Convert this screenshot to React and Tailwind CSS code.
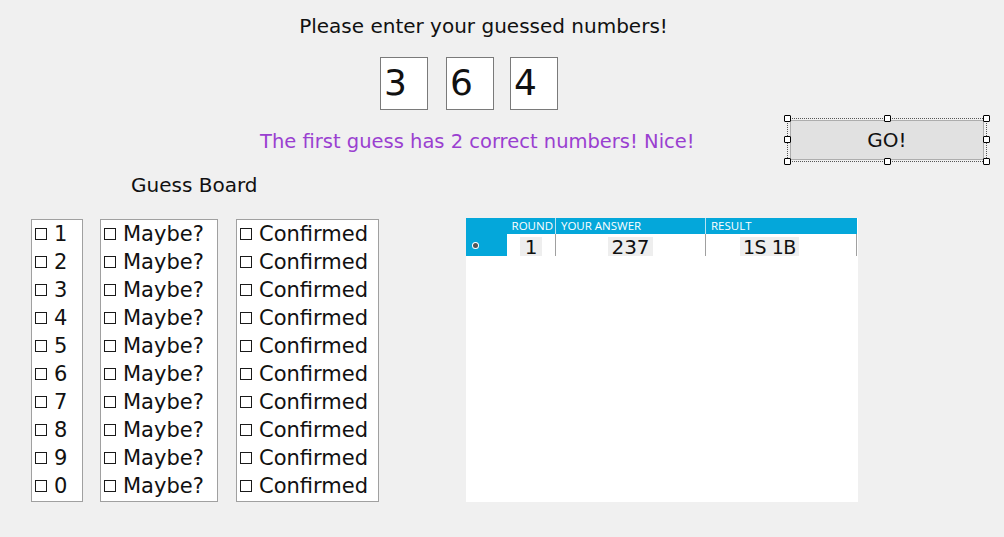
import { useState } from "react";

const digits = ["1", "2", "3", "4", "5", "6", "7", "8", "9", "0"];

function Box() {
  return <span className="inline-block w-[12px] h-[12px] border border-[#1a1a1a] bg-white shrink-0" />;
}

function CheckColumn({ label, width }) {
  return (
    <div className={`${width} border border-[#a0a0a0] bg-white pb-px pl-[3px]`}>
      {digits.map((d) => (
        <div key={d} className="h-[28px] flex items-center gap-[7px]">
          <Box />
          <span className="text-[21px] leading-none text-[#111]">{label || d}</span>
        </div>
      ))}
    </div>
  );
}

function Handle() {
  return <span className="block w-[7px] h-[7px] bg-white border border-black rounded-[1px]" />;
}

function App() {
  const [guess] = useState(["3", "6", "4"]);

  return (
    <div className="w-[1004px] h-[537px] bg-[#f0f0f0] overflow-hidden text-[#111]" style={{ fontFamily: '"DejaVu Sans", sans-serif' }}>
      {/* title */}
      <div className="w-[967px] pt-[13px] h-[39px] text-center text-[20px] leading-[26px]">
        Please enter your guessed numbers!
      </div>

      {/* guess inputs */}
      <div className="flex mt-[18px] pl-[380px] gap-[18px] h-[53px]">
        {guess.map((g, i) => (
          <div key={i} className={`w-[48px] h-[53px] bg-white border border-[#7a7a7a] pl-[3px] text-[36px] leading-[50px] ${i === 2 ? "-ml-[2px]" : ""}`}>
            {g}
          </div>
        ))}
      </div>

      {/* message + GO */}
      <div className="flex items-center mt-[5px] h-[50px]">
        <div className="pl-[260px] pt-[4px] w-[784px] text-[19.5px] text-[#9a3fd0]">
          The first guess has 2 correct numbers! Nice!
        </div>
        <div className="relative w-[206px] h-[50px]">
          <div className="absolute left-[3px] top-[3px] right-[3px] bottom-[3px] border border-dotted border-[#555]" />
          <div className="absolute left-0 top-0"><Handle /></div>
          <div className="absolute left-[100px] top-0"><Handle /></div>
          <div className="absolute right-0 top-0"><Handle /></div>
          <div className="absolute left-0 top-[21px]"><Handle /></div>
          <div className="absolute right-0 top-[21px]"><Handle /></div>
          <div className="absolute left-0 bottom-0"><Handle /></div>
          <div className="absolute left-[100px] bottom-0"><Handle /></div>
          <div className="absolute right-0 bottom-0"><Handle /></div>
          <button className="mt-[5px] ml-[6px] w-[194px] h-[40px] bg-[#e1e1e1] border border-[#adadad] text-[20px] text-[#111]">
            GO!
          </button>
        </div>
      </div>

      {/* guess board label */}
      <div className="pl-[131px] mt-[6px] h-[28px] text-[20px] leading-[28px]">Guess Board</div>

      <div className="flex items-start mt-[19px]">
        <div className="flex pl-[31px] mt-px">
          <CheckColumn width="w-[52px]" />
          <div className="ml-[17px]">
            <CheckColumn width="w-[118px]" label="Maybe?" />
          </div>
          <div className="ml-[18px]">
            <CheckColumn width="w-[143px]" label="Confirmed" />
          </div>
        </div>

        {/* results grid */}
        <div className="ml-[87px] w-[392px] h-[284px] bg-white">
          <div className="flex h-[16px] w-[391px] bg-[#04a7da] text-white text-[11.5px] leading-[16px]" style={{ fontFamily: '"Open Sans", sans-serif' }}>
            <div className="w-[41px]" />
            <div className="w-[49px] border-r border-[#b9e3f2] text-right pr-[2px]">ROUND</div>
            <div className="w-[150px] border-r border-[#b9e3f2] pl-[5px]">YOUR ANSWER</div>
            <div className="w-[151px] pl-[5px]">RESULT</div>
          </div>
          <div className="flex h-[22px] w-[392px]">
            <div className="w-[41px] bg-[#04a7da] flex items-center pl-[6px]">
              <span className="w-[7px] h-[7px] rounded-full bg-white flex items-center justify-center">
                <span className="w-[5px] h-[5px] rounded-full bg-[#555]" />
              </span>
            </div>
            <div className="w-[49px] border-r border-[#a0a0a0] flex justify-center items-end">
              <span className="bg-[#eeeeee] w-[22px] h-[19px] text-center text-[20px] leading-[20px]">1</span>
            </div>
            <div className="w-[150px] border-r border-[#a0a0a0] flex justify-center items-end">
              <span className="bg-[#eeeeee] px-[3px] h-[19px] text-[20px] leading-[20px]">237</span>
            </div>
            <div className="w-[151px] border-r border-[#a0a0a0] flex items-end">
              <span className="ml-[34px] bg-[#eeeeee] px-[3px] h-[19px] text-[19px] leading-[20px] tracking-[-0.5px]">1S 1B</span>
            </div>
          </div>
        </div>
      </div>
    </div>
  );
}

export default App;
